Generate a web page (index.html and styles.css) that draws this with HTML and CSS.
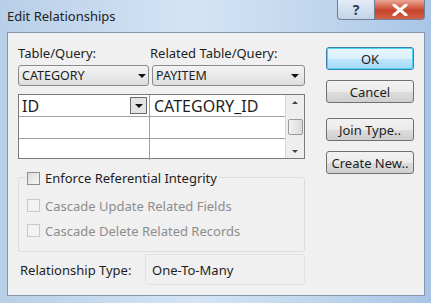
FILE: index.html
```html
<!DOCTYPE html>
<html lang="en">
<head>
    <meta charset="UTF-8">
    <title>Edit Relationships</title>
    <link rel="stylesheet" href="styles.css">
</head>
<body>
    <div class="window">
        <div class="titlebar">
            <span class="title">Edit Relationships</span>
            <div class="caption-buttons">
                <span class="cap-btn help">?</span>
                <span class="cap-btn close">
                    <svg width="16" height="12" viewBox="0 0 16 12">
                        <path d="M2 1 L14 11 M14 1 L2 11" stroke="#fff" stroke-width="3" stroke-linecap="round"/>
                    </svg>
                </span>
            </div>
        </div>

        <div class="client">
            <div class="main">
                <div class="labels">
                    <span class="lbl-left">Table/Query:</span>
                    <span>Related Table/Query:</span>
                </div>

                <div class="combos">
                    <div class="combo left">CATEGORY <span class="arrow"></span></div>
                    <div class="combo right">PAYITEM <span class="arrow"></span></div>
                </div>

                <div class="grid">
                    <div class="cells">
                        <div class="row">
                            <div class="cell c1">ID <span class="cell-drop"><span class="arrow"></span></span></div>
                            <div class="cell c2">CATEGORY_ID</div>
                        </div>
                        <div class="row">
                            <div class="cell c1"></div>
                            <div class="cell c2"></div>
                        </div>
                        <div class="row last">
                            <div class="cell c1"></div>
                            <div class="cell c2"></div>
                        </div>
                    </div>
                    <div class="scrollbar">
                        <span class="up"></span>
                        <span class="thumb"></span>
                        <span class="down"></span>
                    </div>
                </div>

                <div class="group">
                    <label class="check legend"><span class="box"></span>Enforce Referential Integrity</label>
                    <label class="check disabled"><span class="box"></span>Cascade Update Related Fields</label>
                    <label class="check disabled"><span class="box"></span>Cascade Delete Related Records</label>
                </div>

                <div class="reltype">
                    <span class="reltype-label">Relationship Type:</span>
                    <div class="reltype-value">One-To-Many</div>
                </div>
            </div>

            <div class="buttons">
                <button class="btn default">OK</button>
                <button class="btn">Cancel</button>
                <button class="btn gap">Join Type..</button>
                <button class="btn">Create New..</button>
            </div>
        </div>
    </div>
</body>
</html>
```

FILE: styles.css
```css
body {
    margin: 0;
    font-family: "Noto Sans", sans-serif;
    font-size: 13px;
    color: #1e1e1e;
}

.window {
    width: 431px;
    height: 303px;
    box-sizing: border-box;
    padding: 0 6px 7px 7px;
    background: linear-gradient(to right, #b8cfe8, #d4e4f5 45%, #c3d8ee 70%, #a9c5e6);
    display: flex;
    flex-direction: column;
}

.titlebar {
    height: 32px;
    display: flex;
    justify-content: space-between;
    align-items: flex-start;
}

.title {
    margin-top: 7px;
    font-size: 13px;
    color: #222;
}

.caption-buttons {
    display: flex;
}

.cap-btn {
    height: 19px;
    display: flex;
    align-items: center;
    justify-content: center;
    border: 1px solid #6d7f99;
    border-top: none;
}

.help {
    width: 36px;
    border-radius: 0 0 0 4px;
    background: linear-gradient(#e4ecf6, #c3d3e8);
    color: #2b3e5e;
    font-weight: bold;
    font-size: 14px;
}

.close {
    width: 49px;
    border-left: none;
    border-radius: 0 0 4px 0;
    background: linear-gradient(#e9a693, #c8432b 55%, #d0614a);
}

.client {
    flex: 1;
    display: flex;
    background: #f0f0f0;
    border: 1px solid #8596ad;
}

.main {
    width: 287px;
    margin-left: 10px;
    padding-top: 11px;
    display: flex;
    flex-direction: column;
}

.labels {
    display: flex;
    height: 20px;
}

.lbl-left {
    width: 132px;
}

.combos {
    display: flex;
    gap: 3px;
    margin-top: 1px;
}

.combo {
    height: 21px;
    box-sizing: border-box;
    border: 1px solid #8a8a8a;
    border-radius: 3px;
    background: linear-gradient(#f4f4f4, #dedede);
    display: flex;
    align-items: center;
    justify-content: space-between;
    padding: 0 2px 0 3px;
    font-size: 12.5px;
}

.combo.left {
    width: 131px;
}

.combo.right {
    flex: 1;
    padding-right: 5px;
}

.arrow {
    width: 0;
    height: 0;
    border-left: 4px solid transparent;
    border-right: 4px solid transparent;
    border-top: 4px solid #111;
}

.grid {
    margin-top: 8px;
    height: 65px;
    box-sizing: border-box;
    border: 1px solid #7a7a7a;
    background: #fff;
    display: flex;
}

.cells {
    flex: 1;
}

.row {
    display: flex;
    height: 21px;
    border-bottom: 1px solid #a0a0a0;
}

.row.last {
    border-bottom: none;
}

.cell {
    display: flex;
    align-items: center;
    justify-content: space-between;
    font-size: 16px;
    box-sizing: border-box;
}

.c1 {
    width: 131px;
    padding: 0 2px 0 3px;
    border-right: 1px solid #a0a0a0;
}

.c2 {
    flex: 1;
    padding-left: 4px;
}

.cell-drop {
    width: 17px;
    height: 17px;
    box-sizing: border-box;
    border: 1px solid #6a6a6a;
    background: #e4e4e4;
    display: flex;
    align-items: center;
    justify-content: center;
}

.scrollbar {
    width: 19px;
    background: #eeeeee;
    border-left: 1px solid #d8d8d8;
    display: flex;
    flex-direction: column;
    align-items: center;
    padding: 6px 0 5px;
    box-sizing: border-box;
    justify-content: space-between;
}

.up, .down {
    width: 0;
    height: 0;
    border-left: 3px solid transparent;
    border-right: 3px solid transparent;
}

.up {
    border-bottom: 3px solid #444;
}

.down {
    border-top: 3px solid #444;
}

.thumb {
    width: 15px;
    height: 16px;
    box-sizing: border-box;
    border: 1px solid #9a9a9a;
    border-radius: 2px;
    background: linear-gradient(to right, #f3f3f3, #dadada);
}

.group {
    margin-top: 18px;
    height: 75px;
    box-sizing: border-box;
    border: 1px solid #dcdcdc;
    border-radius: 3px;
    padding: 0 8px;
    display: flex;
    flex-direction: column;
}

.check {
    display: flex;
    align-items: center;
    gap: 5px;
    height: 25px;
}

.check.legend {
    margin-top: -7px;
    align-self: flex-start;
    background: #f0f0f0;
    padding-right: 2px;
    height: 14px;
    margin-bottom: 8px;
}

.box {
    width: 13px;
    height: 13px;
    box-sizing: border-box;
    border: 1px solid #8e8f8f;
    background: linear-gradient(135deg, #dcdcdc, #f6f6f6);
}

.check.disabled {
    color: #8d8d8d;
}

.check.disabled .box {
    border-color: #c9c9c9;
    background: #f3f3f3;
}

.reltype {
    display: flex;
    align-items: center;
    margin-top: 2px;
}

.reltype-label {
    width: 125px;
    padding-left: 2px;
}

.reltype-value {
    flex: 1;
    height: 31px;
    box-sizing: border-box;
    border: 1px solid #e2e2e2;
    border-radius: 3px;
    display: flex;
    align-items: center;
    padding-left: 6px;
}

.buttons {
    margin-left: 21px;
    padding-top: 14px;
    width: 88px;
    display: flex;
    flex-direction: column;
    gap: 10px;
}

.btn {
    height: 23px;
    font-family: "Noto Sans", sans-serif;
    font-size: 13px;
    color: #1e1e1e;
    border: 1px solid #707070;
    border-radius: 3px;
    background: linear-gradient(#f2f2f2, #ebebeb 50%, #dddddd 51%, #cfcfcf);
    padding: 0;
}

.btn.default {
    border-color: #3c7fb1;
    box-shadow: inset 0 0 0 1px #48d8f6;
    background: linear-gradient(#eaf6fd, #d9f0fc 50%, #bee6fd 51%, #a7d9f5);
}

.btn.gap {
    margin-top: 5px;
}
```
